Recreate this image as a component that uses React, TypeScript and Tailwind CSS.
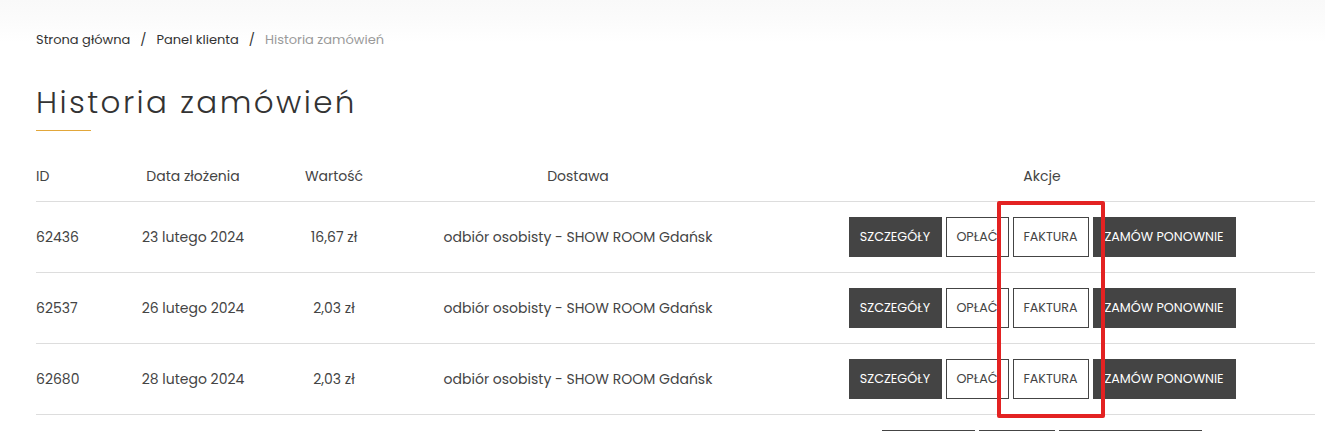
const FONT = "font-['Poppins','Open_Sans','Noto_Sans',sans-serif]";

type Order = {
  id: string;
  date: string;
  value: string;
  delivery: string;
  canPay: boolean;
};

const ORDERS: Order[] = [
  { id: "62436", date: "23 lutego 2024", value: "16,67 zł", delivery: "odbiór osobisty - SHOW ROOM Gdańsk", canPay: true },
  { id: "62537", date: "26 lutego 2024", value: "2,03 zł", delivery: "odbiór osobisty - SHOW ROOM Gdańsk", canPay: true },
  { id: "62680", date: "28 lutego 2024", value: "2,03 zł", delivery: "odbiór osobisty - SHOW ROOM Gdańsk", canPay: true },
  { id: "62811", date: "29 lutego 2024", value: "4,06 zł", delivery: "odbiór osobisty - SHOW ROOM Gdańsk", canPay: false },
];

const DarkButton = ({ label, w }: { label: string; w: string }) => (
  <button className={`${w} h-[40px] bg-[#444444] text-white text-[12.7px] uppercase flex items-center justify-center`}>
    {label}
  </button>
);

const LightButton = ({ label, w }: { label: string; w: string }) => (
  <button className={`${w} h-[40px] bg-white border border-[#444444] text-[#444444] text-[12.7px] uppercase flex items-center justify-center`}>
    {label}
  </button>
);

const App = () => {
  return (
    <div className={`relative min-h-screen bg-white bg-[linear-gradient(#f9f9f9_0px,#fbfbfb_18px,#ffffff_42px)] ${FONT} text-[#444444]`}>
      <div className="pl-[36px] pr-[10px]">
        {/* Breadcrumb */}
        <nav className="pt-[30px] h-[50px] flex items-center gap-[10px] text-[13px] leading-[20px]">
          <span className="text-[#333333]">Strona główna</span>
          <span className="text-[#333333]">/</span>
          <span className="text-[#333333]">Panel klienta</span>
          <span className="text-[#333333]">/</span>
          <span className="text-[#9a9a9a]">Historia zamówień</span>
        </nav>

        {/* Title */}
        <h1 className="mt-[32px] text-[31px] leading-[40px] font-light tracking-[2.4px] text-[#333333]">
          Historia zamówień
        </h1>
        <div className="mt-[8px] w-[55px] h-px bg-[#e2a73a]" />

        {/* Table */}
        <div className="mt-[20px] w-[1279px] text-[14px]">
          <div className="h-[51px] border-b border-[#dddddd] flex items-center">
            <div className="w-[84px]">ID</div>
            <div className="w-[146px] text-center">Data złożenia</div>
            <div className="w-[136px] text-center">Wartość</div>
            <div className="w-[352px] text-center">Dostawa</div>
            <div className="flex-1 pl-[15px] text-center">Akcje</div>
          </div>

          {ORDERS.map((o) => (
            <div key={o.id} className="h-[71px] border-b border-[#dddddd] flex items-center">
              <div className="w-[84px]">{o.id}</div>
              <div className="w-[146px] text-center">{o.date}</div>
              <div className="w-[136px] text-center">{o.value}</div>
              <div className="w-[352px] text-center">{o.delivery}</div>
              <div className="flex-1 pl-[15px] flex justify-center gap-[4px]">
                <DarkButton label="Szczegóły" w="w-[93px]" />
                {o.canPay && <LightButton label="Opłać" w="w-[63px]" />}
                <LightButton label="Faktura" w="w-[76px]" />
                <DarkButton label="Zamów ponownie" w="w-[143px]" />
              </div>
            </div>
          ))}
        </div>
      </div>

      {/* Annotation frame */}
      <div className="absolute left-[997px] top-[201px] w-[108px] h-[217px] border-[4px] border-[#e32222] rounded-[2px] pointer-events-none" />
    </div>
  );
};

export default App;
